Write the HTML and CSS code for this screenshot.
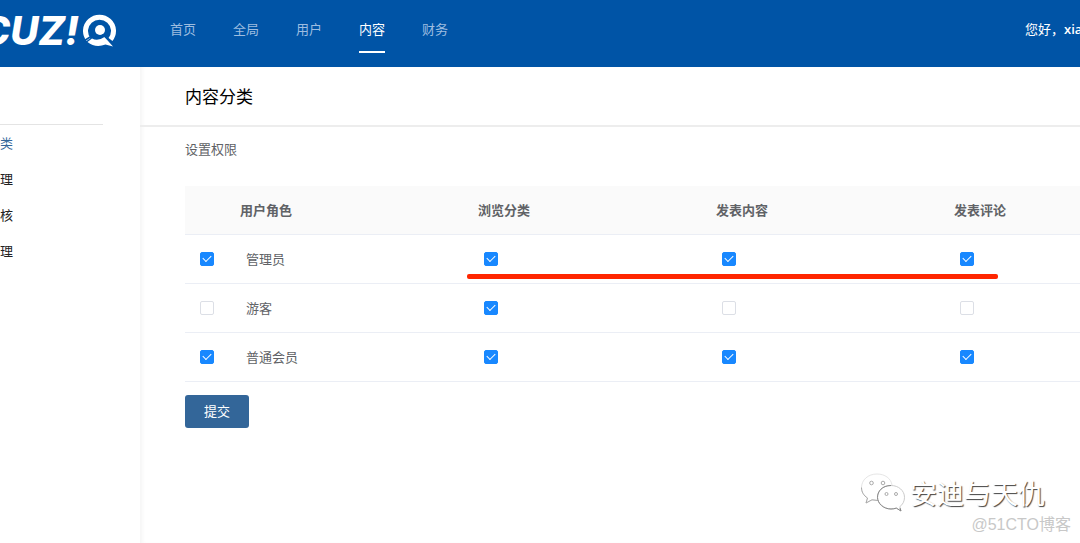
FILE: index.html
```html
<!DOCTYPE html>
<html lang="zh-CN">
<head>
<meta charset="utf-8">
<title>内容分类</title>
<link rel="stylesheet" href="styles.css">
</head>
<body>
<header class="topbar">
  <a class="logo" href="#">
    <span class="logo-text">CUZ!</span>
    <svg class="logo-icon" viewBox="0 0 34 34" aria-hidden="true">
      <path d="M5.500 26.500A14 13.800 0 1 1 27.500 26.500" fill="none" stroke="#fff" stroke-width="5"/>
      <circle cx="17" cy="17" r="5" fill="#fff"/>
      <path d="M14 20 9.500 24.500" stroke="#0054a6" stroke-width="0"/>
      <path d="M4.500 29 9 25.600Q15 28.600 21.500 24L30 33.400 22.500 31.600Q12.400 35.500 4.500 29Z" fill="#fff"/>
      <path d="M0 28.500 9.500 22.500M19.500 21.500 30 30.500" stroke="#0054a6" stroke-width="1.500"/>
    </svg>
  </a>
  <nav class="nav">
    <a href="#">首页</a>
    <a href="#">全局</a>
    <a href="#">用户</a>
    <a class="active" href="#">内容</a>
    <a href="#">财务</a>
  </nav>
  <div class="greeting">您好，<b>xia</b></div>
</header>
<div class="body">
  <aside class="sidebar">
    <nav class="menu">
      <a class="current" href="#">类</a>
      <a href="#">理</a>
      <a href="#">核</a>
      <a href="#">理</a>
    </nav>
  </aside>
  <main class="main">
    <h1 class="title">内容分类</h1>
    <form class="content">
      <h2 class="subtitle">设置权限</h2>
      <div class="table-wrap">
        <table class="table">
          <thead>
            <tr><th class="pick"></th><th class="col">用户角色</th><th class="col">浏览分类</th><th class="col">发表内容</th><th>发表评论</th></tr>
          </thead>
          <tbody>
            <tr>
              <td class="pick"><input type="checkbox" id="r1" checked></td>
              <td><label for="r1">管理员</label></td>
              <td><input type="checkbox" aria-label="管理员 浏览分类" checked></td>
              <td><input type="checkbox" aria-label="管理员 发表内容" checked></td>
              <td><input type="checkbox" aria-label="管理员 发表评论" checked></td>
            </tr>
            <tr>
              <td class="pick"><input type="checkbox" id="r2"></td>
              <td><label for="r2">游客</label></td>
              <td><input type="checkbox" aria-label="游客 浏览分类" checked></td>
              <td><input type="checkbox" aria-label="游客 发表内容"></td>
              <td><input type="checkbox" aria-label="游客 发表评论"></td>
            </tr>
            <tr>
              <td class="pick"><input type="checkbox" id="r3" checked></td>
              <td><label for="r3">普通会员</label></td>
              <td><input type="checkbox" aria-label="普通会员 浏览分类" checked></td>
              <td><input type="checkbox" aria-label="普通会员 发表内容" checked></td>
              <td><input type="checkbox" aria-label="普通会员 发表评论" checked></td>
            </tr>
          </tbody>
        </table>
        <span class="marker"></span>
      </div>
      <button class="submit" type="button">提交</button>
    </form>
  </main>
</div>
<div class="watermark">
  <div class="account">
    <svg class="wechat" viewBox="0 0 46 40" aria-hidden="true">
      <path d="M17 1C8 1 1.500 7 1.500 14.500c0 4.500 2.200 8 6 10.500L6 30l6-3.200 6 .7L32 12C31 5.500 25 1 17 1Z" fill="#fff" stroke="#e6e6e6"/>
      <path d="M1.500 14.500c0 4.500 2.200 8 6 10.500L6 30l6-3.200 6 .7" fill="none" stroke="#aaa"/>
      <path d="M31 12.500c-7.600 0-13.500 5.200-13.500 11.800S23.400 36 31 36c2 0 3.700-.3 5.300-.9L41 38l-1.200-4.300c3-2.200 4.700-5.500 4.700-9.400 0-6.600-5.900-11.800-13.500-11.800Z" fill="#fff" stroke="#ccc"/>
      <path d="M31 12.500c-9 0-13.500 6-13.500 11.800S23.400 36 31 36c2 0 3.700-.3 5.300-.9L41 38l-1-3" fill="none" stroke="#888"/>
      <g fill="#fff" stroke="#aaa"><circle cx="11.500" cy="10" r="1.800"/><circle cx="23" cy="10" r="1.800"/><circle cx="26.500" cy="21" r="1.500"/><circle cx="36" cy="21" r="1.500"/></g>
    </svg>
    <span>安迪与天仇</span>
  </div>
  <div class="site">@51CTO博客</div>
</div>
</body>
</html>
```
FILE: styles.css
```css
* { box-sizing: border-box; }
body {
  margin: 0;
  min-height: 100vh;
  display: flex;
  flex-direction: column;
  overflow: hidden;
  background: #fff;
  color: #606266;
  font: 13px/20px "Noto Sans CJK SC", sans-serif;
}
a { color: inherit; text-decoration: none; }
.topbar {
  display: flex;
  height: 67px;
  background: #0054a6;
  color: #fff;
}
.logo {
  display: flex;
  justify-content: flex-end;
  gap: 4px;
  flex: none;
  width: 117px;
  padding-top: 13px;
  overflow: hidden;
}
.logo-text {
  font: italic 800 39px/36px Inter, sans-serif;
}
.logo-icon { flex: none; width: 34px; height: 34px; }
.nav { display: flex; gap: 37px; margin-left: 53px; }
.nav a {
  height: 53px;
  padding-top: 19px;
  color: #9dbde0;
}
.nav .active { color: #fff; border-bottom: 2px solid #fff; }
.greeting {
  width: 55px;
  margin-left: auto;
  padding-top: 19px;
  overflow: hidden;
  white-space: nowrap;
}
.greeting b { font-family: "Open Sans", sans-serif; font-weight: 600; }
.body { display: flex; flex: 1; }
.sidebar {
  flex: none;
  width: 140px;
  padding-top: 57px;
}
.menu {
  display: flex;
  flex-direction: column;
  gap: 16px;
  width: 103px;
  padding-top: 8px;
  border-top: 1px solid #e4e4e4;
  color: #222;
}
.menu .current { color: #336699; }
.main {
  flex: 1;
  min-width: 0;
  box-shadow: inset 4px 0 4px -2px #f4f4f4;
}
.title {
  margin: 0;
  padding: 17px 0 17px 45px;
  border-bottom: 2px solid #ededed;
  color: #000;
  font-size: 17px;
  line-height: 24px;
  font-weight: 400;
}
.content { padding: 12px 0 0 45px; }
.subtitle { margin: 0 0 27px; font-size: 13px; font-weight: 400; }
.table-wrap { position: relative; }
.table {
  width: 100%;
  table-layout: fixed;
  border-collapse: separate;
  border-spacing: 0;
}
th, td {
  height: 49px;
  padding: 0 0 1px 18px;
  border-bottom: 1px solid #ebeef5;
  text-align: left;
}
th { padding-left: 12px; background: #fafafa; font-weight: 700; }
.pick { width: 43px; padding-left: 15px; }
.col { width: 238px; }
input {
  appearance: none;
  display: block;
  width: 14px;
  height: 14px;
  margin: 0;
  border: 1px solid #dcdfe6;
  border-radius: 2px;
  background: #fff;
}
input:checked {
  display: grid;
  place-items: center;
  border-color: #1888ff;
  background: #1888ff;
}
input:checked::after {
  content: "";
  width: 7px;
  height: 4px;
  margin-bottom: 2px;
  border: solid #fff;
  border-width: 0 0 1px 1px;
  transform: rotate(-45deg);
}
.marker {
  position: absolute;
  left: 282px;
  top: 88px;
  width: 531px;
  height: 5px;
  border-radius: 2px;
  background: #ff2600;
}
.submit {
  display: block;
  width: 64px;
  height: 33px;
  margin-top: 13px;
  padding: 0 0 2px;
  border: 0;
  border-radius: 3px;
  background: #336699;
  color: #fff;
  font: inherit;
}
.watermark {
  position: absolute;
  right: 9px;
  bottom: 8px;
  text-align: right;
}
.account {
  display: flex;
  align-items: center;
  gap: 4px;
  padding: 0 26px 2px 0;
  color: #fff;
  font-size: 27px;
  line-height: 38px;
  font-weight: 400;
  text-shadow: 1px 1px 1px #444;
}
.wechat { width: 46px; height: 40px; }
.site {
  color: #c8c8c8;
  font: 16px/20px "Liberation Sans", "Noto Sans CJK SC", sans-serif;
}
```
